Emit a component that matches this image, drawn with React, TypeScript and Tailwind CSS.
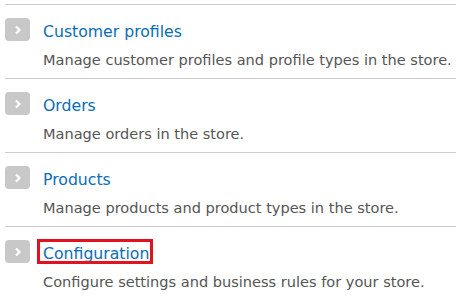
import React from 'react';

interface AdminItem {
  title: string;
  description: string;
  highlighted?: boolean;
}

const items: AdminItem[] = [
  { title: 'Customer profiles', description: 'Manage customer profiles and profile types in the store.' },
  { title: 'Orders', description: 'Manage orders in the store.' },
  { title: 'Products', description: 'Manage products and product types in the store.' },
  { title: 'Configuration', description: 'Configure settings and business rules for your store.', highlighted: true },
];

const ArrowIcon: React.FC = () => (
  <div className="flex-shrink-0 w-[25px] h-[23px] rounded-[4px] bg-[#c8c8c8] flex items-center justify-center mt-[13px]">
    <svg width="8" height="10" viewBox="0 0 8 10">
      <polyline points="2,1.5 5.5,5 2,8.5" fill="none" stroke="#ffffff" strokeWidth="2.2" />
    </svg>
  </div>
);

const App: React.FC = () => {
  return (
    <div className="w-[456px] h-[298px] bg-white overflow-hidden pt-[4px] pl-[5px] font-['DejaVu_Sans',Verdana,sans-serif]">
      {items.map((item) => (
        <div key={item.title} className="flex gap-[13px] border-t border-[#cccccc] h-[74px]">
          <ArrowIcon />
          <div className="flex flex-col pt-[15px] min-w-0">
            <div>
              <a className="relative inline-block text-[15.7px] leading-[20px] text-[#0a6db5] whitespace-nowrap">
                {item.title}
                {item.highlighted && (
                  <span className="absolute -left-[6px] -right-[4px] -top-[5px] bottom-0 border-[3px] border-[#e3121e]" />
                )}
              </a>
            </div>
            <p className="mt-[6px] text-[14.55px] leading-[20px] text-[#555555] whitespace-nowrap">
              {item.description}
            </p>
          </div>
        </div>
      ))}
    </div>
  );
};

export default App;
